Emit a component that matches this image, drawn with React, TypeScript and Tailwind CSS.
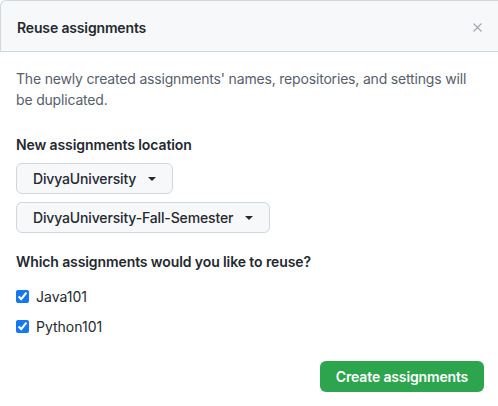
import React from "react";

function Caret() {
  return (
    <svg width="8" height="4" viewBox="0 0 8 4" className="ml-3">
      <path d="M0 0 L8 0 L4 4 Z" fill="#24292f" />
    </svg>
  );
}

function Dropdown({ label }: { label: string }) {
  return (
    <button className="flex h-[31px] items-center rounded-md border border-[#d0d7de] bg-[#f6f8fa] pl-4 pr-4 text-[14px] font-medium tracking-[-0.15px] text-[#24292f]">
      <span>{label}</span>
      <Caret />
    </button>
  );
}

export default function App() {
  return (
    <div
      className="h-[406px] w-[498px] overflow-hidden bg-white"
      style={{ fontFamily: "Inter, 'Noto Sans', sans-serif" }}
    >
      <div className="w-[500px]">
        <div className="flex h-[52px] items-center justify-between rounded-tl-md border-l border-t border-b border-[#d0d7de] bg-[#f6f8fa] pl-4 pr-[18px]">
          <h2 className="pt-[2px] text-[14px] font-semibold tracking-[-0.15px] text-[#24292f]">Reuse assignments</h2>
          <svg width="9" height="9" viewBox="0 0 9 9" className="mt-[3px]">
            <path d="M0.5 0.5 L8.5 8.5 M8.5 0.5 L0.5 8.5" stroke="#a0a7ae" strokeWidth="1.1" />
          </svg>
        </div>
        <div className="px-4 pt-4">
          <p className="whitespace-nowrap text-[14px] leading-[21px] tracking-[-0.18px] text-[#57606a]">
            The newly created assignments' names, repositories, and settings will
            <br />
            be duplicated.
          </p>
          <h3 className="mt-[24px] text-[14px] font-semibold leading-[21px] tracking-[-0.1px] text-[#24292f]">
            New assignments location
          </h3>
          <div className="mt-[8px] flex flex-col items-start gap-[8px]">
            <Dropdown label="DivyaUniversity" />
            <Dropdown label="DivyaUniversity-Fall-Semester" />
          </div>
          <h3 className="mt-[18px] text-[14px] font-semibold leading-[21px] tracking-[-0.1px] text-[#24292f]">
            Which assignments would you like to reuse?
          </h3>
          <div className="mt-[14px] flex flex-col gap-[10px]">
            {["Java101", "Python101"].map((n) => (
              <label key={n} className="flex h-[20px] items-center gap-[7px] text-[14px] text-[#24292f]">
                <input
                  type="checkbox"
                  defaultChecked
                  className="m-0 h-[13px] w-[13px] accent-[#1677f2]"
                />
                {n}
              </label>
            ))}
          </div>
          <div className="mt-[25px] flex justify-end">
            <button className="h-[31px] w-[164px] rounded-md bg-[#2da44e] text-[14px] font-semibold tracking-[-0.15px] text-white">
              Create assignments
            </button>
          </div>
        </div>
      </div>
    </div>
  );
}
